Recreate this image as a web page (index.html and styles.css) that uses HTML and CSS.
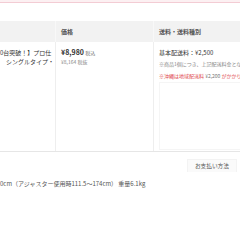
FILE: index.html
```html
<!DOCTYPE html>
<html lang="ja">
<head>
<meta charset="utf-8">
<link rel="stylesheet" href="styles.css">
</head>
<body>
<div class="topbar"></div>
<div class="table">
  <div class="th"></div>
  <div class="th th-price">価格</div>
  <div class="th th-ship">送料・送料種別</div>
  <div class="td td-name">
    <span class="line">0台突破！】プロ仕</span>
    <span class="line indent">シングルタイプ・</span>
  </div>
  <div class="td td-price">
    <div class="line"><span class="price">¥8,980</span> <span class="tax">税込</span></div>
    <div class="line sub">¥8,164 税抜</div>
  </div>
  <div class="td td-ship">
    <div class="line">基本配送料：¥2,500</div>
    <div class="line note">※商品1個につき、上記配送料金とな</div>
    <div class="line warn">※沖縄は地域配送料 <span class="warn-price">¥2,200</span> がかかり</div>
    <div class="calc"></div>
  </div>
</div>
<div class="tabs">
  <div class="tab">お支払い方法</div>
</div>
<p class="desc">0cm（アジャスター使用時111.5～174cm） 重量6.1kg</p>
</body>
</html>
```
FILE: styles.css
```css
html, body {
  margin: 0;
  padding: 0;
  background: #ffffff;
}
body {
  width: 240px;
  height: 240px;
  overflow: hidden;
  font-family: "Noto Sans CJK JP", "Noto Sans", sans-serif;
  color: #333333;
  font-size: 6px;
}
.topbar {
  height: 2px;
  background: #fcf0f2;
  border-bottom: 1px solid #f3ccd4;
  margin-bottom: 18px;
}
.table {
  display: grid;
  grid-template-columns: 55px 98px 87px;
  grid-template-rows: 21px 109px;
  width: 240px;
  border-bottom: 1px solid #e6e6e6;
}
.th {
  background: #f2f2f2;
  color: #555555;
  font-weight: bold;
  line-height: 21px;
  padding-left: 5px;
  white-space: nowrap;
  border-left: 1px solid #f8f8f8;
}
.th:first-child {
  border-left: none;
}
.td {
  padding-top: 6px;
  line-height: 9px;
  white-space: nowrap;
  overflow: hidden;
  border-left: 1px solid #eeeeee;
}
.td-name {
  border-left: none;
  display: flex;
  flex-direction: column;
}
.indent {
  padding-left: 6px;
}
.td-price, .td-ship {
  padding-left: 5px;
}
.price {
  font-size: 7px;
  font-weight: bold;
  color: #333333;
}
.tax {
  font-size: 5px;
  color: #777777;
}
.sub {
  font-size: 5px;
  color: #888888;
}
.note {
  font-size: 5px;
  color: #888888;
  margin-top: 2px;
}
.warn {
  font-size: 5px;
  color: #e0474c;
  margin-top: 3px;
}
.warn-price {
  color: #777777;
}
.calc {
  margin-top: 2px;
  height: 66px;
  border: 1px solid #f5f5f5;
  border-right: none;
}
.tabs {
  display: flex;
  justify-content: flex-end;
  margin-top: 7px;
  padding-right: 3px;
}
.tab {
  height: 12px;
  line-height: 12px;
  padding: 0 7px;
  font-size: 5.7px;
  color: #555555;
  background: #fafafa;
  border: 1px solid #f3f3f3;
  border-bottom: none;
}
.desc {
  margin: 7px 0 0 0;
  line-height: 9px;
  color: #555555;
  white-space: nowrap;
}
```
